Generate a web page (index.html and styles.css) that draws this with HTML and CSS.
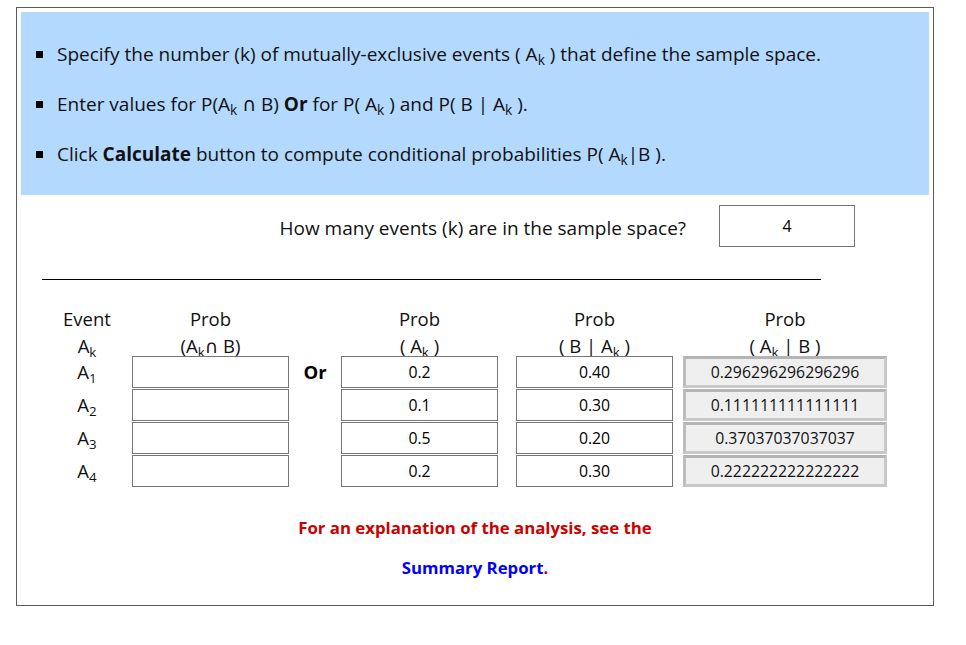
FILE: index.html
```html
<!DOCTYPE html>
<html>
<head>
<meta charset="utf-8">
<link rel="stylesheet" href="styles.css">
</head>
<body>
<div class="frame">
  <div class="intro">
    <ul class="steps">
      <li>Specify the number (k) of mutually-exclusive events ( A<sub>k</sub> ) that define the sample space.</li>
      <li>Enter values for P(A<sub>k</sub> ∩ B) <b>Or</b> for P( A<sub>k</sub> ) and P( B | A<sub>k</sub> ).</li>
      <li>Click <b>Calculate</b> button to compute conditional probabilities P( A<sub>k</sub>|B ).</li>
    </ul>
  </div>

  <div class="question">
    <span class="qtext">How many events (k) are in the sample space?</span>
    <input class="kbox" type="text" value="4">
  </div>

  <div class="rule"></div>

  <div class="grid">
    <div class="head">Event<br>A<sub>k</sub></div>
    <div class="head">Prob<br>(A<sub>k</sub>∩ B)</div>
    <div class="head"></div>
    <div class="head">Prob<br>( A<sub>k</sub> )</div>
    <div class="head"></div>
    <div class="head">Prob<br>( B | A<sub>k</sub> )</div>
    <div class="head"></div>
    <div class="head">Prob<br>( A<sub>k</sub> | B )</div>

    <div class="ev">A<sub>1</sub></div>
    <input class="cell" type="text" value="">
    <div class="or">Or</div>
    <input class="cell" type="text" value="0.2">
    <div></div>
    <input class="cell" type="text" value="0.40">
    <div></div>
    <input class="out" type="text" value="0.296296296296296" readonly>

    <div class="ev">A<sub>2</sub></div>
    <input class="cell" type="text" value="">
    <div></div>
    <input class="cell" type="text" value="0.1">
    <div></div>
    <input class="cell" type="text" value="0.30">
    <div></div>
    <input class="out" type="text" value="0.111111111111111" readonly>

    <div class="ev">A<sub>3</sub></div>
    <input class="cell" type="text" value="">
    <div></div>
    <input class="cell" type="text" value="0.5">
    <div></div>
    <input class="cell" type="text" value="0.20">
    <div></div>
    <input class="out" type="text" value="0.37037037037037" readonly>

    <div class="ev">A<sub>4</sub></div>
    <input class="cell" type="text" value="">
    <div></div>
    <input class="cell" type="text" value="0.2">
    <div></div>
    <input class="cell" type="text" value="0.30">
    <div></div>
    <input class="out" type="text" value="0.222222222222222" readonly>
  </div>

  <p class="note">For an explanation of the analysis, see the</p>
  <p class="note"><a class="report" href="#">Summary Report</a>.</p>
</div>
</body>
</html>
```

FILE: styles.css
```css
html, body {
  margin: 0;
  padding: 0;
  background: #ffffff;
}

body {
  font-family: "Open Sans", "DejaVu Sans", sans-serif;
  color: #000000;
}

.frame {
  box-sizing: border-box;
  width: 918px;
  height: 599px;
  margin: 7px 0 0 16px;
  padding: 4px;
  border: 1px solid #5a5a5a;
}

.intro {
  background: #b3d9ff;
  height: 183px;
  box-sizing: border-box;
  padding-top: 29px;
}

.steps {
  list-style: none;
  margin: 0;
  padding: 0;
  display: flex;
  flex-direction: column;
  gap: 24px;
}

.steps li {
  position: relative;
  padding-left: 36px;
  font-size: 19px;
  line-height: 26px;
  color: #111111;
  white-space: nowrap;
}

.steps li::before {
  content: "";
  position: absolute;
  left: 15px;
  top: 10px;
  width: 7px;
  height: 7px;
  background: #000000;
}

sub {
  font-size: 0.72em;
  line-height: 0;
  vertical-align: -0.3em;
}

.question {
  display: flex;
  align-items: center;
  justify-content: flex-end;
  gap: 33px;
  padding-right: 74px;
  margin-top: 10px;
  height: 42px;
}

.qtext {
  font-size: 19px;
  color: #111111;
  white-space: nowrap;
  padding-top: 3px;
}

.kbox {
  box-sizing: border-box;
  width: 136px;
  height: 42px;
  margin: 0;
  border: 1px solid #767676;
  border-radius: 0;
  text-align: center;
  font-family: "Open Sans", "DejaVu Sans", sans-serif;
  font-size: 16px;
  color: #000000;
  background: #ffffff;
}

.rule {
  margin: 32px 0 0 21px;
  width: 779px;
  height: 1px;
  background: #000000;
}

.grid {
  display: grid;
  grid-template-columns: 90px 157px 52px 157px 18px 157px 10px 204px;
  grid-auto-rows: 32px;
  grid-template-rows: 50px;
  row-gap: 1px;
  margin: 25px 0 0 21px;
}

.head {
  font-size: 18.5px;
  line-height: 27px;
  text-align: center;
  color: #111111;
  white-space: nowrap;
}

.ev {
  font-size: 18.5px;
  line-height: 32px;
  text-align: center;
  color: #111111;
}

.or {
  font-size: 18.5px;
  font-weight: bold;
  line-height: 32px;
  text-align: center;
}

.cell, .out {
  box-sizing: border-box;
  width: 100%;
  height: 32px;
  margin: 0;
  padding: 0;
  border-radius: 0;
  text-align: center;
  font-family: "Open Sans", "DejaVu Sans", sans-serif;
  font-size: 15.8px;
  color: #000000;
}

.cell {
  border: 1px solid #767676;
  background: #ffffff;
}

.out {
  border: 3px solid #c8c8c8;
  border-top-color: #b4b4b4;
  border-left-color: #bdbdbd;
  background: #efefef;
  color: #111111;
}

.note {
  margin: 0;
  text-align: center;
  font-size: 16.8px;
  font-weight: bold;
  line-height: 40px;
  color: #cc0000;
}

.note:first-of-type {
  margin-top: 21px;
}

.report {
  color: #0000ff;
  text-decoration: none;
}
```
